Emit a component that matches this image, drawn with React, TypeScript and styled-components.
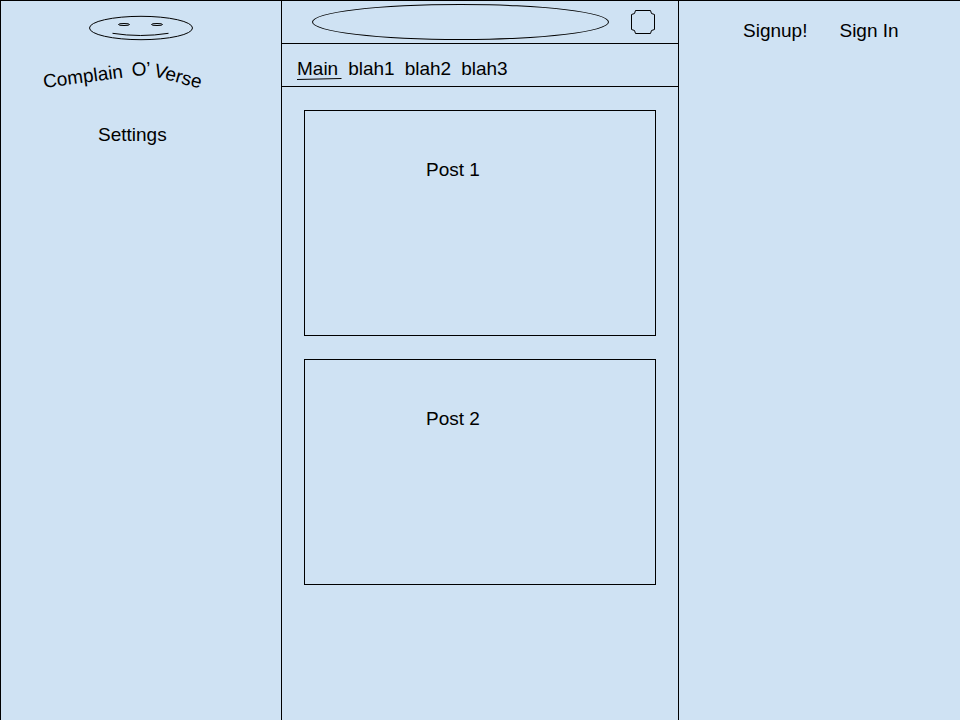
import React from "react";
import styled, { createGlobalStyle } from "styled-components";

const ink = "#000000";
const paper = "#cfe2f3";

const GlobalStyle = createGlobalStyle`
  *, *::before, *::after {
    box-sizing: border-box;
  }
  body {
    margin: 0;
    background: ${paper};
    color: ${ink};
    font-family: "Liberation Sans", Arial, sans-serif;
    font-size: 19px;
    line-height: 22px;
  }
`;

const Page = styled.div`
  display: grid;
  grid-template-columns: minmax(0, 281fr) minmax(0, 398fr) minmax(0, 281fr);
  min-height: 100vh;
  border-top: 1px solid ${ink};
`;

const Sidebar = styled.aside`
  display: flex;
  flex-direction: column;
  align-items: flex-start;
  gap: 24px;
  padding: 9px 16px 24px 39px;
  border-left: 1px solid ${ink};
`;

const Logo = styled.svg`
  display: block;
  width: 170px;
  height: 90px;
  overflow: visible;
  font-size: 19px;
`;

const SideNav = styled.nav`
  padding-left: 58px;
`;

const TextLink = styled.a`
  color: inherit;
  text-decoration: none;
  white-space: nowrap;
`;

const Feed = styled.main`
  border-left: 1px solid ${ink};
  border-right: 1px solid ${ink};
`;

const SearchBar = styled.form`
  display: flex;
  align-items: center;
  gap: 22px;
  height: 43px;
  padding: 0 23px 0 30px;
  border-bottom: 1px solid ${ink};
`;

const SearchInput = styled.input`
  flex: 1;
  min-width: 0;
  height: 36px;
  padding: 0 40px;
  border: 1px solid ${ink};
  border-radius: 50%;
  background: transparent;
  color: inherit;
  font: inherit;
`;

const IconButton = styled.button`
  flex: none;
  width: 24px;
  height: 24px;
  padding: 0;
  border: 0;
  background: transparent;
  color: inherit;
  cursor: pointer;

  svg {
    display: block;
  }
`;

const Tabs = styled.nav`
  display: flex;
  align-items: center;
  gap: 10px;
  height: 43px;
  padding: 8px 15px 0;
  border-bottom: 1px solid ${ink};
`;

const Tab = styled(TextLink)`
  position: relative;
`;

const TabStroke = styled.svg`
  position: absolute;
  left: 0;
  bottom: 0;
  width: 45px;
  height: 2px;
  overflow: visible;
`;

const Posts = styled.div`
  display: flex;
  flex-direction: column;
  gap: 23px;
  padding: 23px 22px;
`;

const PostCard = styled.article`
  min-height: 226px;
  padding: 48px 16px 16px 121px;
  border: 1px solid ${ink};
`;

const PostTitle = styled.h2`
  margin: 0;
  font-size: 19px;
  font-weight: 400;
  line-height: 22px;
`;

const Account = styled.aside`
  padding: 19px 16px 24px 64px;
`;

const AccountNav = styled.nav`
  display: flex;
  flex-wrap: wrap;
  gap: 8px 32px;
`;

const tabs = ["Main", "blah1", "blah2", "blah3"];
const posts = ["Post 1", "Post 2"];

function BrandLogo() {
  return (
    <Logo viewBox="40 10 170 90" role="img" aria-label="Complain O’ Verse">
      <g fill="none" stroke={ink} strokeWidth="1">
        <ellipse cx="141" cy="28" rx="51.5" ry="11.7" />
        <ellipse cx="124" cy="24.5" rx="5.5" ry="1" />
        <ellipse cx="157" cy="24.5" rx="5.5" ry="1" />
        <path d="M112.5 33.3Q140.5 37.7 168.5 33.3" />
      </g>
      <g fill={ink}>
        <text transform="translate(44 88) rotate(-7.5)">Complain</text>
        <text transform="translate(132 76) rotate(-3)">O’</text>
        <text transform="translate(153 76) rotate(15)">Verse</text>
      </g>
    </Logo>
  );
}

function PlaqueIcon() {
  return (
    <svg width="24" height="24" viewBox="0 0 24 24" fill="none" stroke="currentColor" aria-hidden="true">
      <path d="M4.5 .5H19.5A4 4 0 0 0 23.5 4.5V19.5A4 4 0 0 0 19.5 23.5H4.5A4 4 0 0 0 .5 19.5V4.5A4 4 0 0 0 4.5 .5Z" />
    </svg>
  );
}

export default function App() {
  return (
    <>
      <GlobalStyle />
      <Page>
        <Sidebar>
          <BrandLogo />
          <SideNav aria-label="Site">
            <TextLink href="#settings">Settings</TextLink>
          </SideNav>
        </Sidebar>
        <Feed>
          <SearchBar role="search" onSubmit={(event) => event.preventDefault()}>
            <SearchInput type="text" aria-label="Search" />
            <IconButton type="submit" aria-label="Submit search">
              <PlaqueIcon />
            </IconButton>
          </SearchBar>
          <Tabs aria-label="Feeds">
            {tabs.map((name, index) => (
              <Tab key={name} href={`#${name}`} aria-current={index === 0 ? "page" : undefined}>
                {name}
                {index === 0 && (
                  <TabStroke viewBox="0 0 45 2" aria-hidden="true">
                    <path d="M0 1.5L44.5 .5" stroke={ink} fill="none" />
                  </TabStroke>
                )}
              </Tab>
            ))}
          </Tabs>
          <Posts>
            {posts.map((title) => (
              <PostCard key={title}>
                <PostTitle>{title}</PostTitle>
              </PostCard>
            ))}
          </Posts>
        </Feed>
        <Account>
          <AccountNav aria-label="Account">
            <TextLink href="#signup">Signup!</TextLink>
            <TextLink href="#signin">Sign In</TextLink>
          </AccountNav>
        </Account>
      </Page>
    </>
  );
}
